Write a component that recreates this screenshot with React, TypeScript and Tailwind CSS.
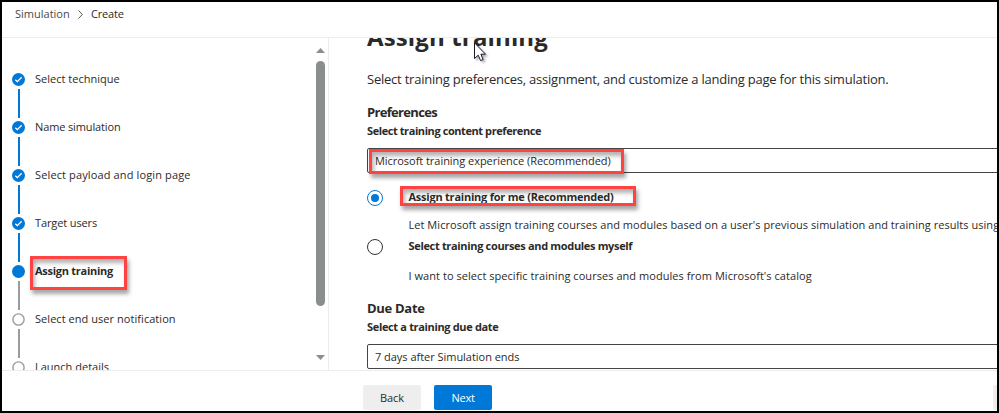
type StepState = 'done' | 'current' | 'todo';

const steps: { label: string; state: StepState; tracking: string }[] = [
  { label: 'Select technique', state: 'done', tracking: 'tracking-[0.01px]' },
  { label: 'Name simulation', state: 'done', tracking: 'tracking-[-0.13px]' },
  { label: 'Select payload and login page', state: 'done', tracking: 'tracking-[0.13px]' },
  { label: 'Target users', state: 'done', tracking: 'tracking-[-0.12px]' },
  { label: 'Assign training', state: 'current', tracking: 'tracking-[-0.27px]' },
  { label: 'Select end user notification', state: 'todo', tracking: 'tracking-[0.05px]' },
  { label: 'Launch details', state: 'todo', tracking: 'tracking-[0px]' },
];

const callout =
  'pointer-events-none absolute border-3 border-[#ff4343] shadow-[2px_4px_4px_rgba(0,0,0,0.35),inset_2px_4px_4px_rgba(0,0,0,0.3)]';

function StepMarker({ state }: { state: StepState }) {
  if (state === 'todo') {
    return (
      <svg viewBox="0 0 13 13" className="size-[13px] shrink-0" fill="white" stroke="#979c9c" strokeWidth="1.4">
        <circle cx="6.5" cy="6.5" r="5.6" />
      </svg>
    );
  }
  return (
    <span className="flex size-[13px] shrink-0 items-center justify-center rounded-full bg-[#0078d7]">
      {state === 'done' && (
        <svg viewBox="0 0 13 13" className="size-[13px]" fill="none" stroke="white" strokeWidth="1.3">
          <path d="M3.3 6.8 5.3 8.6 9.7 4.3" />
        </svg>
      )}
    </span>
  );
}

function Step({ label, state, tracking, last }: { label: string; state: StepState; tracking: string; last: boolean }) {
  return (
    <li className="flex h-12 shrink-0 gap-[10px]">
      <div className="flex w-[13px] flex-col items-center pt-[18px]">
        <StepMarker state={state} />
        {!last && (
          <span
            className={`mt-[3px] -mb-[16px] h-[29px] w-0.5 shrink-0 ${state === 'done' ? 'bg-[#0078d7]' : 'bg-[#979c9c]'}`}
          />
        )}
      </div>
      <div className="relative h-12">
        <span className={`block leading-[48px] ${tracking} ${state === 'current' ? 'font-bold' : ''}`}>{label}</span>
        {state === 'current' && <span className={`${callout} top-[9px] -left-[5px] h-[34px] w-[97px]`} />}
      </div>
    </li>
  );
}

function Radio({ checked }: { checked?: boolean }) {
  return (
    <span
      className={`flex size-4 shrink-0 items-center justify-center rounded-full border ${checked ? 'border-[#0078d7]' : 'border-[#333]'}`}
    >
      {checked && <span className="size-2 rounded-full bg-[#0078d7]" />}
    </span>
  );
}

export default function App() {
  return (
    <div className="flex h-[413px] w-[999px] flex-col overflow-hidden border-2 border-black bg-white font-['Open_Sans','Noto_Sans',sans-serif] text-[11px] whitespace-nowrap text-[#2b2a29]">
      <header className="flex h-9 shrink-0 items-start border-b border-[#ececec] pl-[13px] leading-[24px]">
        <span className="w-[55px] text-[#4a4948]">Simulation</span>
        <svg viewBox="0 0 5 9" className="mt-[8px] ml-[8px] h-[9px] w-[5px]" fill="none" stroke="#555" strokeWidth="1">
          <path d="M0.5 0.5 4.3 4.5 0.5 8.5" />
        </svg>
        <span className="ml-[8px] tracking-[-0.2px]">Create</span>
      </header>

      <div className="flex h-[332px] shrink-0">
        <nav className="flex w-[327px] shrink-0 justify-between overflow-hidden border-r border-[#ececec]">
          <ol className="flex flex-col pt-[17px] pl-[10px]">
            {steps.map((s, i) => (
              <Step key={s.label} {...s} last={i === steps.length - 1} />
            ))}
          </ol>
          <div className="mr-[3px] flex w-[9px] flex-col items-center pt-[10px]">
            <svg viewBox="0 0 9 5" className="h-[5px] w-[9px] shrink-0" fill="#8a8f8c">
              <path d="M4.5 0 9 5H0Z" />
            </svg>
            <span className="mt-2 h-[245px] w-[9px] shrink-0 rounded-full bg-[#8a8f8c]" />
            <svg viewBox="0 0 9 5" className="mt-[49px] h-[5px] w-[9px] shrink-0" fill="#8a8f8c">
              <path d="M0 0H9L4.5 5Z" />
            </svg>
          </div>
        </nav>

        <main className="relative min-w-0 flex-1 overflow-hidden pl-[38px]">
          <h1 className="-mt-[18px] h-[34px] text-[24px] leading-[34px] font-bold tracking-[0.14px]">Assign training</h1>
          <p className="mt-[15px] h-5 text-[13px] leading-5 tracking-[-0.226px]">
            Select training preferences, assignment, and customize a landing page for this simulation.
          </p>

          <h2 className="mt-[13px] h-5 text-[13px] leading-5 font-bold tracking-[-0.67px]">Preferences</h2>
          <p className="h-[18px] leading-[18px] font-bold tracking-[-0.42px]">Select training content preference</p>
          <div className="relative mt-2 -mr-1 h-[25px] rounded-xs border border-[#444] pl-[7px] leading-[24px] tracking-[-0.04px]">
            Microsoft training experience (Recommended)
            <span className={`${callout} top-0 left-[1px] h-[25px] w-[255px]`} />
          </div>

          <div className="mt-[14px] flex h-[49px] pt-[3px]">
            <Radio checked />
            <div className="ml-[25.5px]">
              <div className="relative h-4 leading-[13px] font-bold tracking-[-0.23px]">
                Assign training for me (Recommended)
                <span className={`${callout} -top-1 -left-[8.5px] h-[20px] w-[236px]`} />
              </div>
              <p className="mt-[9px] leading-5 tracking-[0.043px]">
                Let Microsoft assign training courses and modules based on a user's previous simulation and training results using
              </p>
            </div>
          </div>
          <div className="flex h-[49px] pt-[3px]">
            <Radio />
            <div className="ml-[25.5px]">
              <div className="h-4 leading-[13px] font-bold tracking-[-0.33px]">Select training courses and modules myself</div>
              <p className="mt-[11px] leading-5 tracking-[0.05px]">
                I want to select specific training courses and modules from Microsoft's catalog
              </p>
            </div>
          </div>

          <h2 className="mt-[13px] h-5 text-[13px] leading-5 font-bold tracking-[-0.3px]">Due Date</h2>
          <p className="h-[18px] leading-[18px] font-bold tracking-[-0.34px]">Select a training due date</p>
          <div className="mt-2 -mr-1 h-[25px] rounded-xs border border-[#444] pl-[7px] leading-[24px] tracking-[-0.03px]">
            7 days after Simulation ends
          </div>

          <svg
            viewBox="0 0 12 20"
            className="absolute top-[4px] left-[145px] h-5 w-3 overflow-visible drop-shadow-[2px_2px_1px_rgba(0,0,0,0.3)]"
            fill="white"
            stroke="#17172b"
            strokeWidth="1"
          >
            <path d="M0.5 0.8V16.5L4.2 13.2 6.6 18.6 9.1 17.5 6.9 12.2H11.5Z" />
          </svg>
        </main>
      </div>

      <footer className="flex h-[41px] shrink-0 items-start border-t border-[#ececec] pt-[14px] pl-[361px]">
        <button className="h-[25px] w-[58px] shrink-0 rounded-xs bg-[#eee] leading-[25px] font-medium tracking-[-0.07px]">
          Back
        </button>
        <button className="ml-[13px] h-[25px] w-[58px] shrink-0 rounded-xs bg-[#0078d7] leading-[25px] font-medium tracking-[-0.27px] text-white">
          Next
        </button>
        <span className="ml-[501px] h-[25px] w-5 shrink-0 rounded-xs bg-[#eee]" />
      </footer>
    </div>
  );
}
